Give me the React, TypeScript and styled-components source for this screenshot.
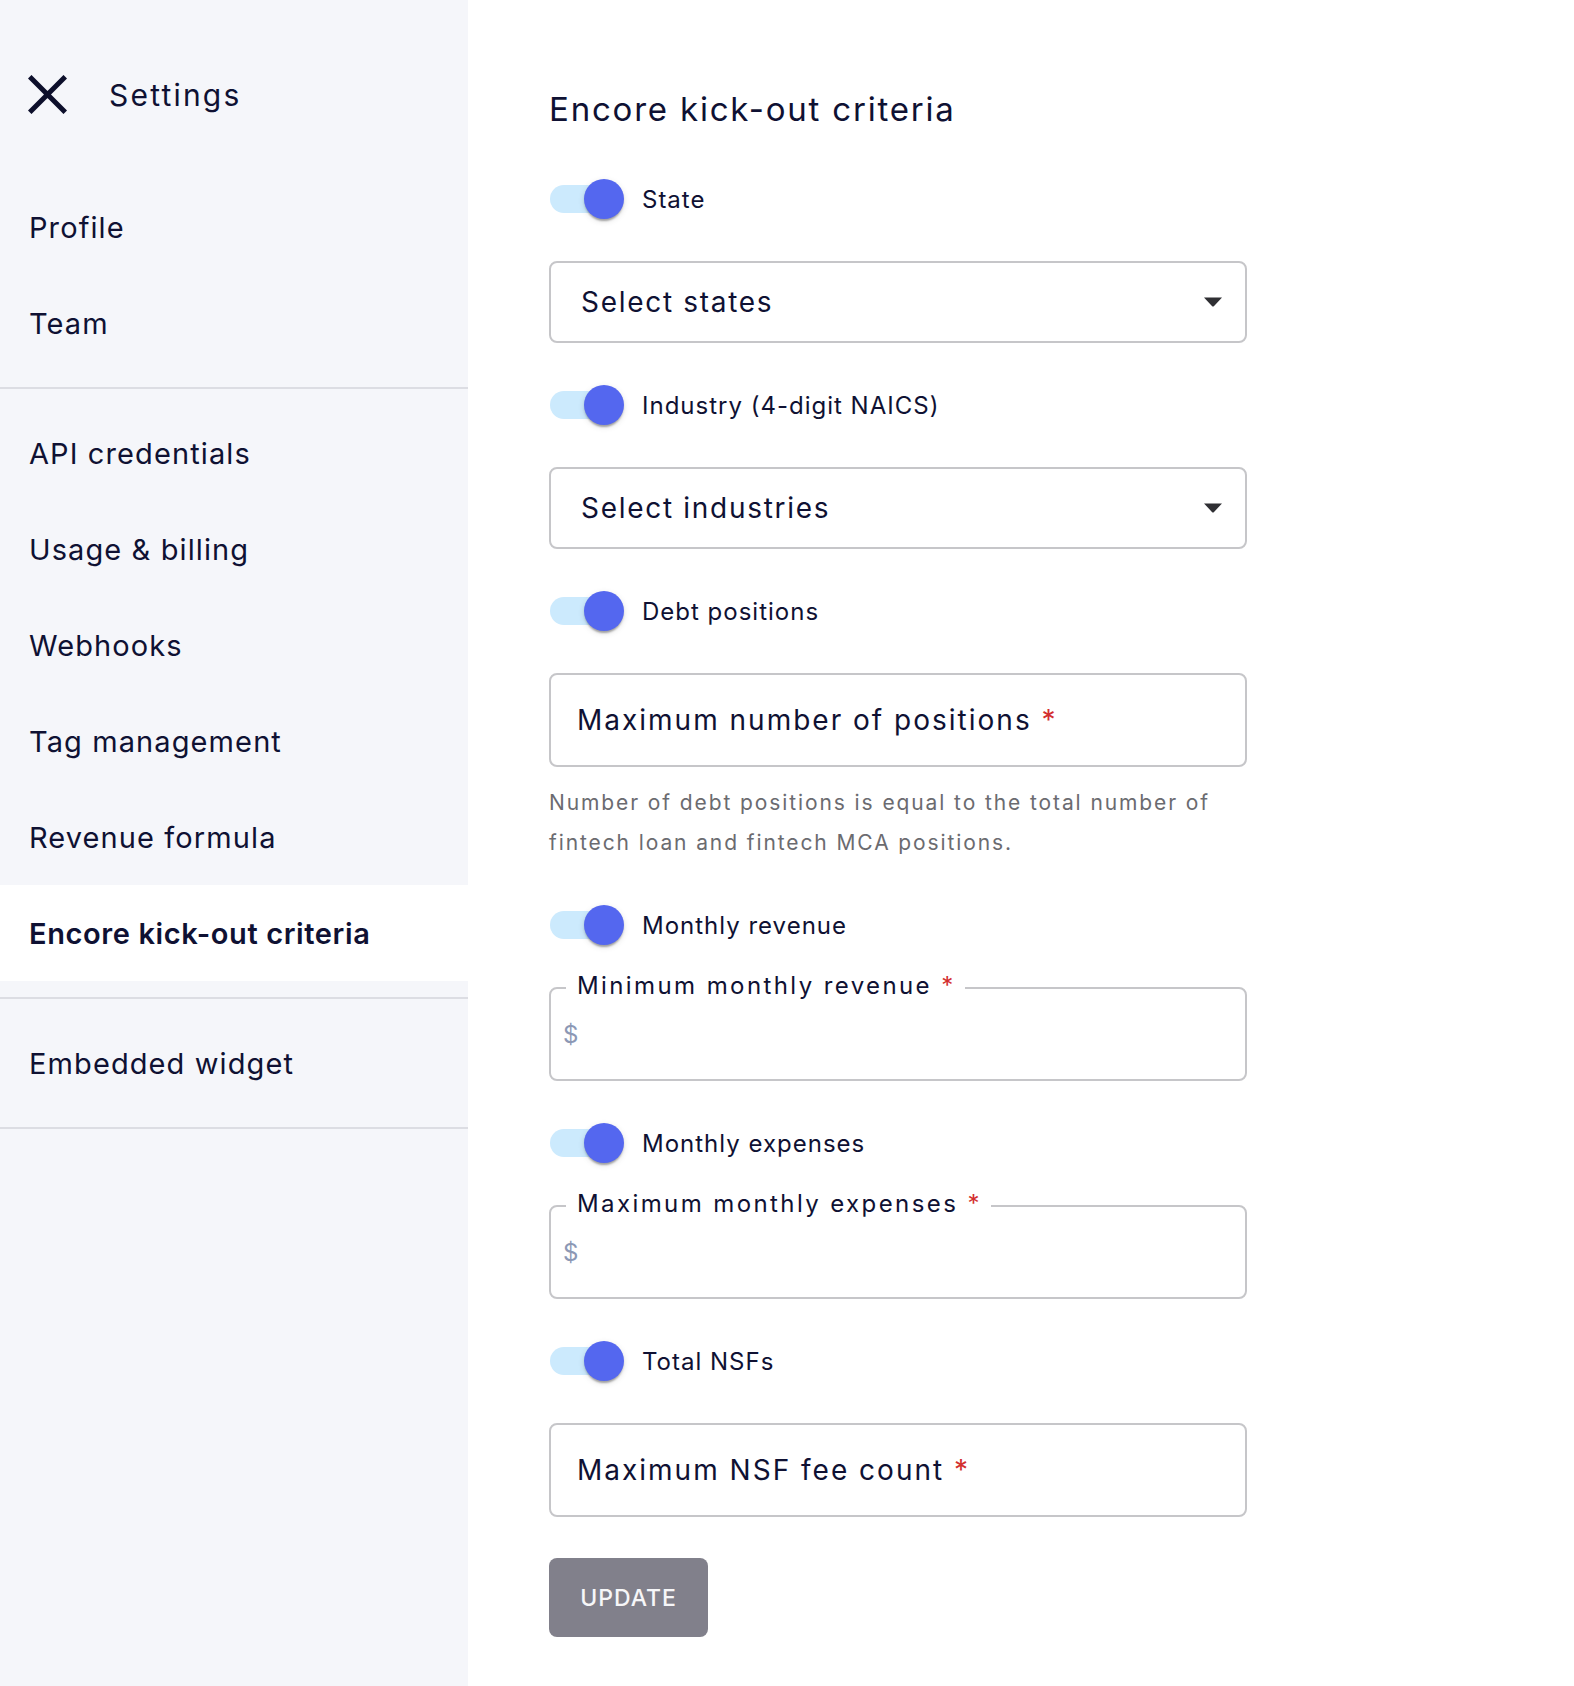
import styled, { createGlobalStyle } from "styled-components";

const GlobalStyle = createGlobalStyle`
  html, body {
    margin: 0;
    padding: 0;
    background: #ffffff;
  }
  body {
    font-family: "Inter", "Liberation Sans", sans-serif;
    color: #0f1133;
  }
`;

const NAV_GROUPS = [
  ["Profile", "Team"],
  [
    "API credentials",
    "Usage & billing",
    "Webhooks",
    "Tag management",
    "Revenue formula",
    "Encore kick-out criteria",
  ],
  ["Embedded widget"],
];

const ACTIVE = "Encore kick-out criteria";

export default function App() {
  return (
    <>
      <GlobalStyle />
      <Page>
        <Sidebar>
          <SidebarHeader>
            <CloseButton aria-label="Close settings">
              <CloseIcon />
            </CloseButton>
            <SidebarTitle>Settings</SidebarTitle>
          </SidebarHeader>

          {NAV_GROUPS.map((group, i) => (
            <NavGroup key={i}>
              {group.map((item) => (
                <NavItem key={item} $active={item === ACTIVE}>
                  {item}
                </NavItem>
              ))}
            </NavGroup>
          ))}
        </Sidebar>

        <Main>
          <Title>Encore kick-out criteria</Title>

          <Form>
            <Toggle label="State" />
            <SelectBox>
              <SelectText>Select states</SelectText>
              <DropArrow />
            </SelectBox>

            <Toggle label="Industry (4-digit NAICS)" />
            <SelectBox>
              <SelectText>Select industries</SelectText>
              <DropArrow />
            </SelectBox>

            <Toggle label="Debt positions" />
            <FieldGroup>
              <TextField>
                <FieldLabel>
                  Maximum number of positions <Required>*</Required>
                </FieldLabel>
              </TextField>
              <HelperText>
                Number of debt positions is equal to the total number of
                fintech loan and fintech MCA positions.
              </HelperText>
            </FieldGroup>

            <Toggle label="Monthly revenue" />
            <TextField>
              <NotchLabel>
                Minimum monthly revenue <Required>*</Required>
              </NotchLabel>
              <Adornment>$</Adornment>
            </TextField>

            <Toggle label="Monthly expenses" />
            <TextField>
              <NotchLabel>
                Maximum monthly expenses <Required>*</Required>
              </NotchLabel>
              <Adornment>$</Adornment>
            </TextField>

            <Toggle label="Total NSFs" />
            <TextField>
              <FieldLabel>
                Maximum NSF fee count <Required>*</Required>
              </FieldLabel>
            </TextField>

            <UpdateButton type="button">Update</UpdateButton>
          </Form>
        </Main>
      </Page>
    </>
  );
}

function Toggle({ label }: { label: string }) {
  return (
    <ToggleRow>
      <SwitchRoot role="switch" aria-checked="true">
        <SwitchTrack />
        <SwitchThumb />
      </SwitchRoot>
      <ToggleLabel>{label}</ToggleLabel>
    </ToggleRow>
  );
}

const CloseIcon = () => (
  <svg width="39" height="39" viewBox="0 0 39 39" fill="none">
    <path
      d="M3.5 3.5 L35.5 35.5 M35.5 3.5 L3.5 35.5"
      stroke="#0d0f2b"
      strokeWidth="5"
      strokeLinecap="square"
    />
  </svg>
);

const DropArrow = () => (
  <svg width="18" height="10" viewBox="0 0 18 10">
    <path d="M0 0.5 H18 L9.8 9.2 Q9 10 8.2 9.2 Z" fill="#2f2f33" />
  </svg>
);

/* --- Styled Components --- */

const Page = styled.div`
  display: flex;
  min-height: 1686px;
`;

const Sidebar = styled.aside`
  width: 468px;
  flex-shrink: 0;
  background: #f5f6fa;
`;

const SidebarHeader = styled.div`
  box-sizing: border-box;
  height: 163px;
  padding: 75px 0 0 28px;
  display: flex;
  align-items: flex-start;
  gap: 42px;
`;

const CloseButton = styled.button`
  width: 39px;
  height: 39px;
  padding: 0;
  border: none;
  background: transparent;
  display: flex;
  cursor: pointer;
`;

const SidebarTitle = styled.h1`
  margin: 0;
  font-size: 30px;
  line-height: 40px;
  font-weight: 400;
  letter-spacing: 2.2px;
  color: #0f1133;
`;

const NavGroup = styled.nav`
  padding: 16px 0;
  border-bottom: 2px solid #dcdde3;
`;

const NavItem = styled.div<{ $active?: boolean }>`
  height: 96px;
  display: flex;
  align-items: center;
  padding-left: 29px;
  font-size: 29px;
  letter-spacing: ${({ $active }) => ($active ? "0.6px" : "1.1px")};
  font-weight: ${({ $active }) => ($active ? 600 : 400)};
  background: ${({ $active }) => ($active ? "#ffffff" : "transparent")};
  color: #0f1133;
  cursor: pointer;
`;

const Main = styled.main`
  flex: 1;
  padding: 89px 0 40px 81px;
`;

const Title = styled.h2`
  margin: 0 0 32px;
  font-size: 33px;
  line-height: 40px;
  font-weight: 400;
  letter-spacing: 1.8px;
  color: #0f1133;
`;

const Form = styled.form`
  width: 698px;
  display: flex;
  flex-direction: column;
  gap: 24px;
`;

const ToggleRow = styled.div`
  height: 76px;
  display: flex;
  align-items: center;
  gap: 18px;
`;

const SwitchRoot = styled.span`
  position: relative;
  width: 75px;
  height: 40px;
  flex-shrink: 0;
  display: flex;
  align-items: center;
  cursor: pointer;
`;

const SwitchTrack = styled.span`
  width: 68px;
  height: 28px;
  margin-left: 1px;
  border-radius: 14px;
  background: #cceafd;
`;

const SwitchThumb = styled.span`
  position: absolute;
  left: 35px;
  top: 0;
  width: 40px;
  height: 40px;
  border-radius: 50%;
  background: #5467ef;
  box-shadow: 0 4px 2px -2px rgba(0, 0, 0, 0.2), 0 2px 2px 0 rgba(0, 0, 0, 0.14),
    0 2px 6px 0 rgba(0, 0, 0, 0.12);
`;

const ToggleLabel = styled.span`
  font-size: 24px;
  letter-spacing: 1px;
  color: #0f1133;
`;

const SelectBox = styled.div`
  box-sizing: border-box;
  height: 82px;
  border: 2px solid #c6c6c9;
  border-radius: 8px;
  padding: 0 23px 0 30px;
  display: flex;
  align-items: center;
  justify-content: space-between;
  cursor: pointer;
`;

const SelectText = styled.span`
  font-size: 28px;
  letter-spacing: 1.7px;
  color: #0f1133;
`;

const FieldGroup = styled.div`
  display: flex;
  flex-direction: column;
  gap: 16px;
`;

const TextField = styled.div`
  position: relative;
  box-sizing: border-box;
  height: 94px;
  border: 2px solid #c6c6c9;
  border-radius: 8px;
  padding: 0 26px;
  display: flex;
  align-items: center;
`;

const FieldLabel = styled.label`
  font-size: 28px;
  letter-spacing: 2px;
  color: #0f1133;
`;

const NotchLabel = styled.label`
  position: absolute;
  top: -18px;
  left: 15px;
  padding: 0 9px 0 11px;
  background: #ffffff;
  font-size: 24px;
  line-height: 30px;
  letter-spacing: 2.4px;
  color: #0f1133;
`;

const Required = styled.span`
  color: #d32f2f;
`;

const Adornment = styled.span`
  margin-left: -14px;
  font-size: 24px;
  color: #8c98b5;
`;

const HelperText = styled.p`
  margin: 0;
  font-size: 21px;
  line-height: 40px;
  letter-spacing: 1.9px;
  color: #6b6b70;
`;

const UpdateButton = styled.button`
  margin-top: 17px;
  width: 159px;
  height: 79px;
  border: none;
  border-radius: 8px;
  background: #81808b;
  color: #f6f6f8;
  font-family: "Inter", "Liberation Sans", sans-serif;
  font-size: 23px;
  font-weight: 500;
  letter-spacing: 1px;
  text-transform: uppercase;
  cursor: pointer;
`;
